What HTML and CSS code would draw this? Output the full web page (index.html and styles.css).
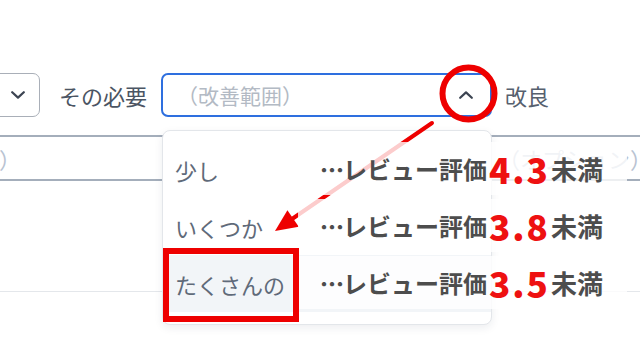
FILE: index.html
```html
<!DOCTYPE html>
<html lang="ja">
<head>
<meta charset="utf-8">
<link rel="stylesheet" href="styles.css">
</head>
<body>
<div class="page">
  <div class="row1">
    <div class="select">
      <svg class="chev" width="14" height="8" viewBox="0 0 14 8"><path d="M1.2 1.2 L7 6.6 L12.8 1.2" fill="none" stroke="#3c4452" stroke-width="2.2" stroke-linecap="round" stroke-linejoin="round"/></svg>
    </div>
    <span class="label">その必要</span>
    <div class="combo">
      <span class="placeholder">（改善範囲）</span>
      <svg class="chev" width="14" height="8" viewBox="0 0 14 8"><path d="M1.2 6.8 L7 1.4 L12.8 6.8" fill="none" stroke="#3c4452" stroke-width="2.2" stroke-linecap="round" stroke-linejoin="round"/></svg>
    </div>
    <span class="label after">改良</span>
  </div>
  <div class="row2">
    <div class="field left"><span class="placeholder">（オプション）</span></div>
    <div class="field right"><span class="placeholder">（オプション）</span></div>
  </div>
  <div class="sep"></div>
</div>

<div class="menu">
  <div class="item">少し</div>
  <div class="item">いくつか</div>
  <div class="item active">たくさんの</div>
</div>

<svg class="marks" width="640" height="357" viewBox="0 0 640 357">
  <circle cx="468.5" cy="93.5" r="26" fill="none" stroke="#ee0000" stroke-width="6"/>
  <line x1="432" y1="123" x2="292" y2="219" stroke="#ee0000" stroke-width="4" stroke-linecap="round"/>
  <polygon points="275,231 298.8,226.7 287.4,210.3" fill="#ee0000"/>
</svg>

<div class="notes">
  <div class="note"><span class="dots">…</span>レビュー評価<b>4.3</b><span class="tail">未満</span></div>
  <div class="note"><span class="dots">…</span>レビュー評価<b>3.8</b><span class="tail">未満</span></div>
  <div class="note"><span class="dots">…</span>レビュー評価<b>3.5</b><span class="tail">未満</span></div>
</div>

<div class="redbox"></div>
</body>
</html>
```

FILE: styles.css
```css
html, body {
  margin: 0;
  padding: 0;
}
body {
  width: 640px;
  height: 357px;
  overflow: hidden;
  position: relative;
  background: #ffffff;
  font-family: "Noto Sans CJK JP", "Noto Sans", sans-serif;
}
.page {
  padding-top: 73px;
  margin-left: -60px;
}
.row1 {
  display: flex;
  align-items: center;
  height: 44px;
}
.select {
  box-sizing: border-box;
  width: 100px;
  height: 44px;
  border: 1.5px solid #a9afb8;
  border-radius: 7px;
  display: flex;
  align-items: center;
  justify-content: flex-end;
  padding-right: 14px;
}
.label {
  font-size: 22px;
  color: #4b5563;
  margin-left: 19px;
  line-height: 44px;
}
.label.after {
  margin-left: 13px;
  color: #56606e;
}
.combo {
  box-sizing: border-box;
  margin-left: 14px;
  width: 331px;
  height: 44px;
  border: 2px solid #2e6fdf;
  border-radius: 7px;
  display: flex;
  align-items: center;
  justify-content: space-between;
  padding: 0 17px 0 14px;
}
.placeholder {
  font-size: 21px;
  color: #b3bac4;
  white-space: nowrap;
}
.row2 {
  display: flex;
  gap: 12px;
  margin-top: 18px;
  margin-left: -89px;
  height: 46px;
}
.field {
  box-sizing: border-box;
  height: 46px;
  border: 2px solid #a4aebb;
  border-radius: 6px;
  display: flex;
  align-items: center;
  padding-left: 14px;
  flex: none;
}
.field.left {
  width: 619px;
}
.field.right {
  width: 260px;
}
.field .placeholder {
  font-size: 22px;
  color: #b9c3d2;
}
.sep {
  margin-top: 110px;
  border-top: 1px solid #e4e7eb;
}
.menu {
  position: absolute;
  left: 162px;
  top: 130px;
  width: 330px;
  height: 195px;
  box-sizing: border-box;
  background: #ffffff;
  border: 1px solid #e3e6ea;
  border-radius: 8px;
  box-shadow: 0 3px 8px rgba(30, 40, 60, 0.08);
  padding-top: 10px;
  z-index: 2;
}
.item {
  height: 57px;
  display: flex;
  align-items: center;
  padding-left: 12px;
  font-size: 22px;
  color: #5f6a79;
}
.item.active {
  background: #f2f5f8;
}
.marks {
  position: absolute;
  left: 0;
  top: 0;
  z-index: 3;
}
.notes {
  position: absolute;
  left: 298px;
  top: 142px;
  width: 329px;
  display: flex;
  flex-direction: column;
  gap: 4px;
  z-index: 4;
}
.note {
  height: 53px;
  display: flex;
  align-items: center;
  padding-left: 22px;
  background: rgba(255, 255, 255, 0.8);
  font-size: 24px;
  font-weight: 700;
  color: #4d4d4d;
  white-space: nowrap;
}
.note .dots {
  font-weight: 900;
  letter-spacing: -1px;
}
.note b {
  font-size: 35px;
  color: #ee1111;
  letter-spacing: 2px;
  margin: 0 1px 0 2px;
}
.note .tail {
  font-size: 26px;
}
.redbox {
  position: absolute;
  left: 163px;
  top: 248px;
  width: 136px;
  height: 74px;
  box-sizing: border-box;
  border: 6px solid #ee0000;
  z-index: 5;
}
```
